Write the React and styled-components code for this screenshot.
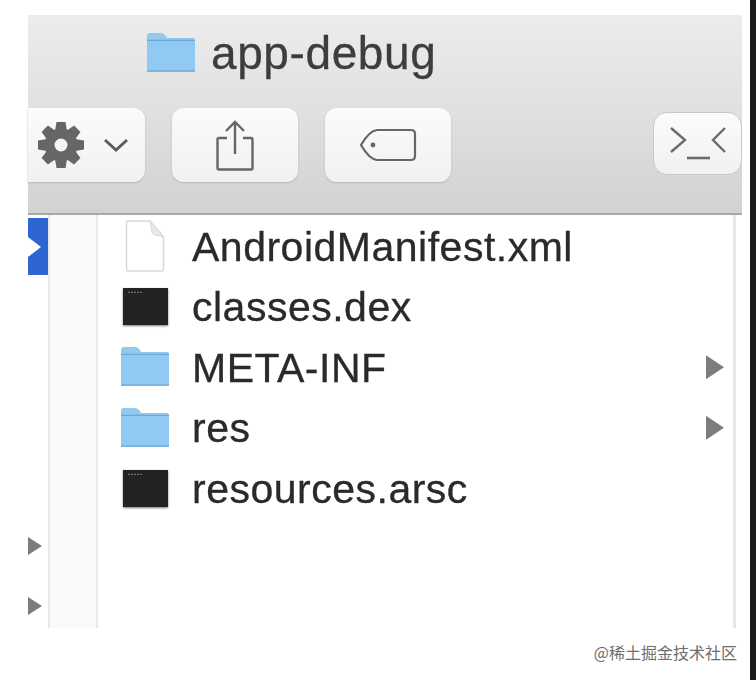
import React from "react";
import styled, { createGlobalStyle } from "styled-components";

const Global = createGlobalStyle`
  html, body {
    margin: 0;
    background: #fff;
  }
`;

function Folder({ size = 50 }) {
  return (
    <FolderSvg viewBox="0 0 50 40" $size={size}>
      <path d="M1 3 Q1 0 4 0 H15 Q18 0 20 3 L21 5 H47 Q49 5 49 7 V37 Q49 39 47 39 H3 Q1 39 1 37 Z" fill="#93c9ee" />
      <path d="M1 7.5 H49" stroke="#6ea9d3" strokeWidth="1.6" />
      <path d="M1 8 H49 V37 Q49 39 47 39 H3 Q1 39 1 37 Z" fill="#90c9f1" />
      <path d="M1 38 H49" stroke="#7aaed4" strokeWidth="1.4" />
    </FolderSvg>
  );
}

function DocIcon() {
  return (
    <svg width="40" height="52" viewBox="0 0 40 52">
      <path d="M1.5 3 Q1.5 1 3.5 1 H25 L38.5 17 V49 Q38.5 51 36.5 51 H3.5 Q1.5 51 1.5 49 Z" fill="#fff" stroke="#d8d8d8" strokeWidth="1.5" />
      <path d="M25 1 L27 12 Q28 15 31 15 L38.5 17 Z" fill="#e9e9e9" stroke="#d8d8d8" />
    </svg>
  );
}

function ExecIcon() {
  return (
    <ExecBox>
      <ExecDots>▪▪▪▪▪</ExecDots>
    </ExecBox>
  );
}

function Gear() {
  const teeth = [0, 45, 90, 135];
  return (
    <svg width="48" height="48" viewBox="0 0 48 48">
      {teeth.map((a) => (
        <path
          key={a}
          d="M19.5 1 H28.5 L30 10 V38 L28.5 47 H19.5 L18 38 V10 Z"
          fill="#666"
          transform={`rotate(${a} 24 24)`}
        />
      ))}
      <circle cx="24" cy="24" r="16.5" fill="#666" />
      <circle cx="24" cy="24" r="6.5" fill="#f4f4f4" />
    </svg>
  );
}

const files = [
  { name: "AndroidManifest.xml", type: "doc" },
  { name: "classes.dex", type: "exec" },
  { name: "META-INF", type: "folder", more: true },
  { name: "res", type: "folder", more: true },
  { name: "resources.arsc", type: "exec" },
];

export default function App() {
  return (
    <Page>
      <Global />
      <Left>
        <Finder>
          <Toolbar>
            <TitleRow>
              <Folder />
              <Title>app-debug</Title>
            </TitleRow>
            <Buttons>
              <GearButton>
                <Gear />
                <svg width="26" height="16" viewBox="0 0 26 16">
                  <path d="M2 3 L13 13 L24 3" fill="none" stroke="#5c5c5c" strokeWidth="3" />
                </svg>
              </GearButton>
              <ToolButton>
                <svg width="38" height="51" viewBox="0 0 38 51">
                  <path d="M11 18 H3 Q1.5 18 1.5 19.5 V48 Q1.5 49.5 3 49.5 H35 Q36.5 49.5 36.5 48 V19.5 Q36.5 18 35 18 H27" fill="none" stroke="#666" strokeWidth="2.4" />
                  <path d="M19 34 V3 M10 11 L19 2 L28 11" fill="none" stroke="#666" strokeWidth="2.4" />
                </svg>
              </ToolButton>
              <ToolButton>
                <svg width="58" height="34" viewBox="0 0 58 34">
                  <path d="M18 2 H52 Q56 2 56 6 V28 Q56 32 52 32 H18 Q10 31 2 17 Q10 3 18 2 Z" fill="none" stroke="#666" strokeWidth="2.2" />
                  <circle cx="14" cy="17" r="2.4" fill="#666" />
                </svg>
              </ToolButton>
              <TerminalButton>
                <svg width="56" height="33" viewBox="0 0 56 33">
                  <path d="M1 1 L15 13 L1 25" fill="none" stroke="#6b6b6b" strokeWidth="2.4" />
                  <path d="M55 1 L43 13 L55 25" fill="none" stroke="#6b6b6b" strokeWidth="2.4" />
                  <path d="M17 31 H40" fill="none" stroke="#6b6b6b" strokeWidth="2.6" />
                </svg>
              </TerminalButton>
            </Buttons>
          </Toolbar>
          <Body>
            <Sidebar>
              <Selected>
                <svg width="14" height="24" viewBox="0 0 14 24">
                  <path d="M0 2 L13 12 L0 22 Z" fill="#fff" />
                </svg>
              </Selected>
              <SideArrows>
                <Arrow $w={14} $h={18} />
                <Arrow $w={14} $h={18} />
              </SideArrows>
            </Sidebar>
            <Gutter />
            <FileList>
              {files.map((f) => (
                <FileRow key={f.name}>
                  <IconSlot>
                    {f.type === "doc" && <DocIcon />}
                    {f.type === "exec" && <ExecIcon />}
                    {f.type === "folder" && <Folder />}
                  </IconSlot>
                  <FileName>{f.name}</FileName>
                  {f.more && <Arrow $w={18} $h={24} />}
                </FileRow>
              ))}
            </FileList>
            <Edge />
          </Body>
        </Finder>
        <Watermark>@稀土掘金技术社区</Watermark>
      </Left>
      <Strip />
    </Page>
  );
}

const Page = styled.div`
  display: flex;
  width: 756px;
  height: 680px;
  overflow: hidden;
  background: #fff;
`;

const Left = styled.div`
  flex: 1;
  display: flex;
  flex-direction: column;
  padding: 15px 0 0 28px;
`;

const Strip = styled.div`
  width: 6px;
  background: #1d1d1d;
`;

const Finder = styled.div`
  width: 714px;
  height: 613px;
  display: flex;
  flex-direction: column;
  filter: blur(0.7px);
`;

const Toolbar = styled.div`
  height: 198px;
  flex: none;
  display: flex;
  flex-direction: column;
  background: linear-gradient(#ececec, #e4e4e4 35%, #d2d2d2);
  border-bottom: 2px solid #a8a8a8;
`;

const TitleRow = styled.div`
  height: 93px;
  display: flex;
  align-items: center;
  gap: 15px;
  padding: 0 0 17px 118px;
  box-sizing: border-box;
`;

const Title = styled.div`
  font: 46px/1 "Liberation Sans", Arial, sans-serif;
  letter-spacing: 0.6px;
  color: #3d3d3d;
  -webkit-text-stroke: 0.3px #3d3d3d;
`;

const FolderSvg = styled.svg`
  width: ${(p) => p.$size}px;
  height: ${(p) => p.$size * 0.8}px;
  flex: none;
`;

const Buttons = styled.div`
  display: flex;
  align-items: center;
  gap: 27px;
  height: 74px;
`;

const ToolButton = styled.div`
  width: 126px;
  height: 74px;
  flex: none;
  display: flex;
  align-items: center;
  justify-content: center;
  background: linear-gradient(#fbfbfb, #f1f1f1);
  border-radius: 12px;
  box-shadow: 0 1px 2px #b5b5b5;
`;

const GearButton = styled(ToolButton)`
  width: 117px;
  border-radius: 0 12px 12px 0;
  justify-content: flex-start;
  gap: 18px;
  padding-left: 9px;
  box-sizing: border-box;
`;

const TerminalButton = styled(ToolButton)`
  width: 89px;
  height: 63px;
  margin: 0 0 3px auto;
  border: 1px solid #c8c8c8;
  box-sizing: border-box;
  box-shadow: none;
  border-radius: 14px;
`;

const Body = styled.div`
  flex: 1;
  display: flex;
  min-height: 0;
`;

const Sidebar = styled.div`
  width: 20px;
  flex: none;
  display: flex;
  flex-direction: column;
  background: #fff;
`;

const Selected = styled.div`
  height: 57px;
  margin-top: 3px;
  display: flex;
  align-items: center;
  background: #2d66d2;
`;

const SideArrows = styled.div`
  display: flex;
  flex-direction: column;
  gap: 42px;
  margin-top: 262px;
`;

const Arrow = styled.div`
  width: ${(p) => p.$w}px;
  height: ${(p) => p.$h}px;
  flex: none;
  background: #7d7d7d;
  clip-path: polygon(0 0, 100% 50%, 0 100%);
`;

const Gutter = styled.div`
  width: 46px;
  flex: none;
  background: #fafafa;
  border-left: 2px solid #e8e8e8;
  border-right: 2px solid #e8e8e8;
`;

const FileList = styled.div`
  flex: 1;
  display: flex;
  flex-direction: column;
  padding-top: 1px;
`;

const FileRow = styled.div`
  height: 60.5px;
  display: flex;
  align-items: center;
  padding: 0 9px 0 20px;
`;

const IconSlot = styled.div`
  width: 54px;
  margin-right: 20px;
  flex: none;
  display: flex;
  justify-content: center;
`;

const ExecBox = styled.div`
  width: 45px;
  height: 37px;
  background: #222322;
  box-shadow: 0 1px 2px #777;
  box-sizing: border-box;
  padding: 3px 5px;
`;

const ExecDots = styled.div`
  font: 5px/1 "Liberation Mono", monospace;
  color: #9a9a9a;
`;

const FileName = styled.div`
  flex: 1;
  padding-top: 2px;
  font: 41px/1 "Liberation Sans", Arial, sans-serif;
  letter-spacing: 0.5px;
  color: #2a2a2a;
  -webkit-text-stroke: 0.3px #2a2a2a;
`;

const Edge = styled.div`
  width: 3px;
  margin-right: 6px;
  flex: none;
  background: #e8e8e8;
`;

const Watermark = styled.div`
  margin: 14px 13px 0 0;
  text-align: right;
  font: 16px/20px "Noto Sans CJK SC", "Liberation Sans", sans-serif;
  color: #6e6e6e;
`;
